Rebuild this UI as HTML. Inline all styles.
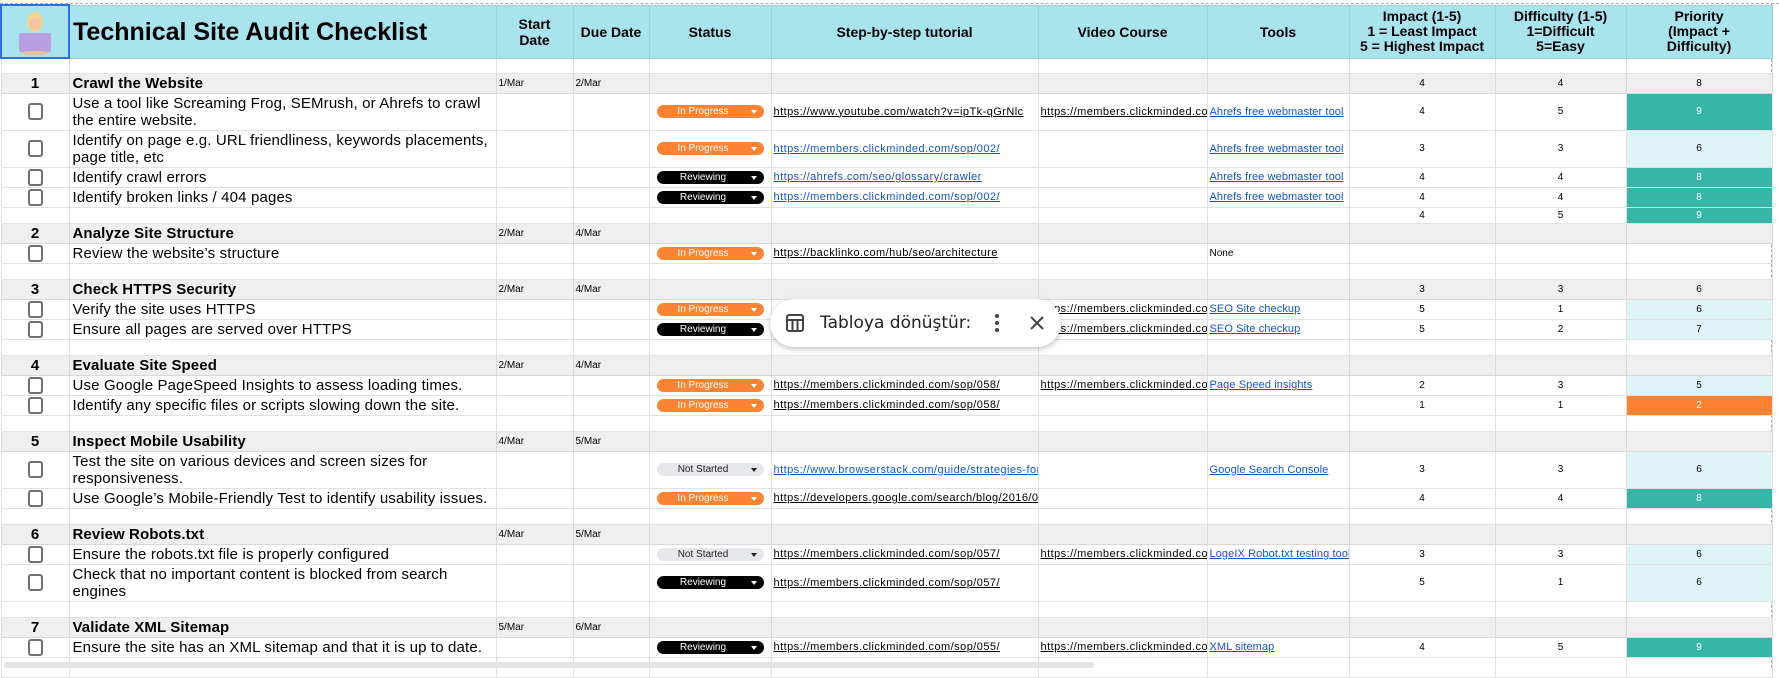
<!DOCTYPE html>
<html><head><meta charset="utf-8"><style>
*{margin:0;padding:0;box-sizing:border-box}
body{width:1779px;height:668px;overflow:hidden;background:#fff;font-family:"Liberation Sans",sans-serif;position:relative}
table{position:absolute;left:0;top:4px;border-collapse:collapse;table-layout:fixed;width:1779px}
td{border:1px solid #e1e1e1;overflow:hidden;white-space:nowrap;font-size:10px;color:#000;padding:0 2px;vertical-align:middle}
tr.h td{background:#a8e3ee;font-weight:bold;font-size:14px;text-align:center;line-height:16px;white-space:normal;border-color:#9cd0da}
tr.s td{background:#efefef;border-color:#d8d8d8}
tr.s td.t{font-weight:bold;font-size:15px;padding-left:3px;letter-spacing:0.1px}
tr.s td.n{font-weight:bold;font-size:15px;text-align:center}
td.t{font-size:15px;padding-left:3px;white-space:normal;line-height:17px;letter-spacing:0.15px}
td.c{text-align:center}
td.d{font-size:10px}
.cb{display:block;margin:0 auto;width:15px;height:17px;border:2px solid #707070;border-radius:3px}
.p{display:block;width:107px;height:13px;border-radius:7px;margin-left:5px;font-size:10px;line-height:13px;text-align:center;position:relative;padding-right:14px}
.p:after{content:"";position:absolute;right:7px;top:5px;border-left:3px solid transparent;border-right:3px solid transparent;border-top:4px solid currentColor}
.ip{background:#fb8333;color:#fff}
.rv{background:#000;color:#fff}
.ns{background:#e6e7eb;color:#222}
a{color:#000;text-decoration:underline;font-size:11px;letter-spacing:0.45px}
a.b{color:#1155cc}
td:nth-child(8) a{letter-spacing:0.1px}
.tl{background:#37b5a9;color:#fff}
.lt{background:#e0f4f8}
.or{background:#fa8232;color:#fff}
</style></head><body>
<div style="position:absolute;left:0;top:0;width:1779px;height:4px;border-bottom:1px dashed #aaa"></div>
<div style="position:absolute;left:1771px;top:4px;height:664px;border-left:1px dashed #aaa"></div>
<table>
<colgroup><col style="width:68px"><col style="width:427px"><col style="width:77px"><col style="width:76px"><col style="width:122px"><col style="width:267px"><col style="width:169px"><col style="width:142px"><col style="width:146px"><col style="width:131px"><col style="width:146px"><col style="width:8px"></colgroup>
<tr class="h" style="height:53px">
<td style="border:2px solid #2b6fe0;position:relative"><svg width="50" height="46" viewBox="0 0 50 46" style="display:block;margin:0 auto"><ellipse cx="25" cy="13" rx="8" ry="10" fill="#f3d48c"/><ellipse cx="25" cy="15" rx="5.5" ry="6.5" fill="#f2c4a4"/><rect x="9" y="24" width="32" height="19" rx="2" fill="#b79fe0"/><ellipse cx="25" cy="44" rx="14" ry="2" fill="#e8c0a0"/></svg></td>
<td style="text-align:left;font-size:25px;padding-left:3px">Technical Site Audit Checklist</td>
<td>Start<br>Date</td><td>Due Date</td><td>Status</td><td>Step-by-step tutorial</td><td>Video Course</td><td>Tools</td>
<td style="line-height:15px">Impact (1-5)<br>1 = Least Impact<br>5 = Highest Impact</td>
<td style="line-height:15px">Difficulty (1-5)<br>1=Difficult<br>5=Easy</td>
<td style="line-height:15px">Priority<br>(Impact +<br>Difficulty)</td><td style="background:#fff;border:none"></td></tr>
<tr style="height:15px"><td></td><td></td><td></td><td></td><td></td><td></td><td></td><td></td><td></td><td></td><td></td><td style="border:none"></td></tr>
<tr class="s" style="height:20px"><td class="n">1</td><td class="t">Crawl the Website</td><td class="d">1/Mar</td><td class="d">2/Mar</td><td></td><td></td><td></td><td></td><td class="c">4</td><td class="c">4</td><td class="c">8</td><td style="background:#fff;border:none"></td></tr>
<tr style="height:37px"><td><span class="cb"></span></td><td class="t">Use a tool like Screaming Frog, SEMrush, or Ahrefs to crawl the entire website.</td><td></td><td></td><td><span class="p ip">In Progress</span></td><td><a>https://www.youtube.com/watch?v=ipTk-qGrNlc</a></td><td><a>https://members.clickminded.com</a></td><td><a class="b">Ahrefs free webmaster tool</a></td><td class="c">4</td><td class="c">5</td><td class="c tl">9</td><td style="border:none"></td></tr>
<tr style="height:37px"><td><span class="cb"></span></td><td class="t">Identify on page e.g. URL friendliness, keywords placements, page title, etc</td><td></td><td></td><td><span class="p ip">In Progress</span></td><td><a class="b">https://members.clickminded.com/sop/002/</a></td><td></td><td><a class="b">Ahrefs free webmaster tool</a></td><td class="c">3</td><td class="c">3</td><td class="c lt">6</td><td style="border:none"></td></tr>
<tr style="height:20px"><td><span class="cb"></span></td><td class="t">Identify crawl errors</td><td></td><td></td><td><span class="p rv">Reviewing</span></td><td><a class="b">https://ahrefs.com/seo/glossary/crawler</a></td><td></td><td><a class="b">Ahrefs free webmaster tool</a></td><td class="c">4</td><td class="c">4</td><td class="c tl">8</td><td style="border:none"></td></tr>
<tr style="height:20px"><td><span class="cb"></span></td><td class="t">Identify broken links / 404 pages</td><td></td><td></td><td><span class="p rv">Reviewing</span></td><td><a class="b">https://members.clickminded.com/sop/002/</a></td><td></td><td><a class="b">Ahrefs free webmaster tool</a></td><td class="c">4</td><td class="c">4</td><td class="c tl">8</td><td style="border:none"></td></tr>
<tr style="height:16px"><td></td><td></td><td></td><td></td><td></td><td></td><td></td><td></td><td class="c">4</td><td class="c">5</td><td class="c tl">9</td><td style="border:none"></td></tr>
<tr class="s" style="height:20px"><td class="n">2</td><td class="t">Analyze Site Structure</td><td class="d">2/Mar</td><td class="d">4/Mar</td><td></td><td></td><td></td><td></td><td></td><td></td><td></td><td style="background:#fff;border:none"></td></tr>
<tr style="height:20px"><td><span class="cb"></span></td><td class="t">Review the website’s structure</td><td></td><td></td><td><span class="p ip">In Progress</span></td><td><a>https://backlinko.com/hub/seo/architecture</a></td><td></td><td>None</td><td></td><td></td><td></td><td style="border:none"></td></tr>
<tr style="height:16px"><td></td><td></td><td></td><td></td><td></td><td></td><td></td><td></td><td></td><td></td><td></td><td style="border:none"></td></tr>
<tr class="s" style="height:20px"><td class="n">3</td><td class="t">Check HTTPS Security</td><td class="d">2/Mar</td><td class="d">4/Mar</td><td></td><td></td><td></td><td></td><td class="c">3</td><td class="c">3</td><td class="c">6</td><td style="background:#fff;border:none"></td></tr>
<tr style="height:20px"><td><span class="cb"></span></td><td class="t">Verify the site uses HTTPS</td><td></td><td></td><td><span class="p ip">In Progress</span></td><td></td><td><a>https://members.clickminded.com</a></td><td><a class="b">SEO Site checkup</a></td><td class="c">5</td><td class="c">1</td><td class="c lt">6</td><td style="border:none"></td></tr>
<tr style="height:20px"><td><span class="cb"></span></td><td class="t">Ensure all pages are served over HTTPS</td><td></td><td></td><td><span class="p rv">Reviewing</span></td><td></td><td><a>https://members.clickminded.com</a></td><td><a class="b">SEO Site checkup</a></td><td class="c">5</td><td class="c">2</td><td class="c lt">7</td><td style="border:none"></td></tr>
<tr style="height:16px"><td></td><td></td><td></td><td></td><td></td><td></td><td></td><td></td><td></td><td></td><td></td><td style="border:none"></td></tr>
<tr class="s" style="height:20px"><td class="n">4</td><td class="t">Evaluate Site Speed</td><td class="d">2/Mar</td><td class="d">4/Mar</td><td></td><td></td><td></td><td></td><td></td><td></td><td></td><td style="background:#fff;border:none"></td></tr>
<tr style="height:20px"><td><span class="cb"></span></td><td class="t">Use Google PageSpeed Insights to assess loading times.</td><td></td><td></td><td><span class="p ip">In Progress</span></td><td><a>https://members.clickminded.com/sop/058/</a></td><td><a>https://members.clickminded.com</a></td><td><a class="b">Page Speed insights</a></td><td class="c">2</td><td class="c">3</td><td class="c lt">5</td><td style="border:none"></td></tr>
<tr style="height:20px"><td><span class="cb"></span></td><td class="t">Identify any specific files or scripts slowing down the site.</td><td></td><td></td><td><span class="p ip">In Progress</span></td><td><a>https://members.clickminded.com/sop/058/</a></td><td></td><td></td><td class="c">1</td><td class="c">1</td><td class="c or">2</td><td style="border:none"></td></tr>
<tr style="height:16px"><td></td><td></td><td></td><td></td><td></td><td></td><td></td><td></td><td></td><td></td><td></td><td style="border:none"></td></tr>
<tr class="s" style="height:20px"><td class="n">5</td><td class="t">Inspect Mobile Usability</td><td class="d">4/Mar</td><td class="d">5/Mar</td><td></td><td></td><td></td><td></td><td></td><td></td><td></td><td style="background:#fff;border:none"></td></tr>
<tr style="height:37px"><td><span class="cb"></span></td><td class="t">Test the site on various devices and screen sizes for responsiveness.</td><td></td><td></td><td><span class="p ns">Not Started</span></td><td><a class="b">https://www.browserstack.com/guide/strategies-for</a></td><td></td><td><a class="b">Google Search Console</a></td><td class="c">3</td><td class="c">3</td><td class="c lt">6</td><td style="border:none"></td></tr>
<tr style="height:20px"><td><span class="cb"></span></td><td class="t">Use Google’s Mobile-Friendly Test to identify usability issues.</td><td></td><td></td><td><span class="p ip">In Progress</span></td><td><a>https://developers.google.com/search/blog/2016/05</a></td><td></td><td></td><td class="c">4</td><td class="c">4</td><td class="c tl">8</td><td style="border:none"></td></tr>
<tr style="height:16px"><td></td><td></td><td></td><td></td><td></td><td></td><td></td><td></td><td></td><td></td><td></td><td style="border:none"></td></tr>
<tr class="s" style="height:20px"><td class="n">6</td><td class="t">Review Robots.txt</td><td class="d">4/Mar</td><td class="d">5/Mar</td><td></td><td></td><td></td><td></td><td></td><td></td><td></td><td style="background:#fff;border:none"></td></tr>
<tr style="height:20px"><td><span class="cb"></span></td><td class="t">Ensure the robots.txt file is properly configured</td><td></td><td></td><td><span class="p ns">Not Started</span></td><td><a>https://members.clickminded.com/sop/057/</a></td><td><a>https://members.clickminded.com</a></td><td><a class="b">LogeIX Robot.txt testing tool</a></td><td class="c">3</td><td class="c">3</td><td class="c lt">6</td><td style="border:none"></td></tr>
<tr style="height:37px"><td><span class="cb"></span></td><td class="t">Check that no important content is blocked from search engines</td><td></td><td></td><td><span class="p rv">Reviewing</span></td><td><a>https://members.clickminded.com/sop/057/</a></td><td></td><td></td><td class="c">5</td><td class="c">1</td><td class="c lt">6</td><td style="border:none"></td></tr>
<tr style="height:16px"><td></td><td></td><td></td><td></td><td></td><td></td><td></td><td></td><td></td><td></td><td></td><td style="border:none"></td></tr>
<tr class="s" style="height:20px"><td class="n">7</td><td class="t">Validate XML Sitemap</td><td class="d">5/Mar</td><td class="d">6/Mar</td><td></td><td></td><td></td><td></td><td></td><td></td><td></td><td style="background:#fff;border:none"></td></tr>
<tr style="height:20px"><td><span class="cb"></span></td><td class="t">Ensure the site has an XML sitemap and that it is up to date.</td><td></td><td></td><td><span class="p rv">Reviewing</span></td><td><a>https://members.clickminded.com/sop/055/</a></td><td><a>https://members.clickminded.com</a></td><td><a class="b">XML sitemap</a></td><td class="c">4</td><td class="c">5</td><td class="c tl">9</td><td style="border:none"></td></tr>
<tr style="height:20px"><td></td><td></td><td></td><td></td><td></td><td></td><td></td><td></td><td></td><td></td><td></td><td style="border:none"></td></tr>
</table>
<div style="position:absolute;left:4px;top:662px;width:1090px;height:6px;background:#e4e4e4;border-radius:3px"></div>
<div style="position:absolute;left:770px;top:299px;width:291px;height:48px;background:#fff;border-radius:24px;box-shadow:0 2px 6px rgba(0,0,0,.25);display:flex;align-items:center;font-family:'DejaVu Sans',sans-serif">
<svg width="20" height="20" viewBox="0 0 20 20" style="margin-left:15px"><rect x="2" y="2" width="16" height="16" rx="2" fill="none" stroke="#444" stroke-width="2"/><line x1="2" y1="7" x2="18" y2="7" stroke="#444" stroke-width="2"/><line x1="7.5" y1="7" x2="7.5" y2="18" stroke="#444" stroke-width="2"/><line x1="12.5" y1="7" x2="12.5" y2="18" stroke="#444" stroke-width="2"/></svg>
<span style="margin-left:15px;font-size:17px;color:#222">Tabloya dönüştür:</span>
<svg width="6" height="20" viewBox="0 0 6 20" style="margin-left:23px"><circle cx="3" cy="3" r="2" fill="#444"/><circle cx="3" cy="10" r="2" fill="#444"/><circle cx="3" cy="17" r="2" fill="#444"/></svg>
<svg width="14" height="14" viewBox="0 0 14 14" style="margin-left:30px"><path d="M1 1L13 13M13 1L1 13" stroke="#444" stroke-width="2"/></svg>
</div>
</body></html>
